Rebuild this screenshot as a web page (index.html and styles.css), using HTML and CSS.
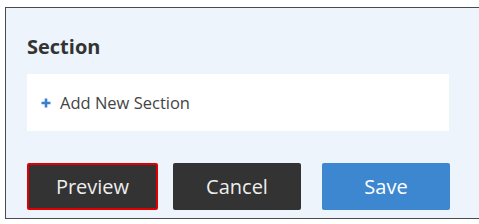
FILE: index.html
```html
<!DOCTYPE html>
<html>
<head>
<meta charset="utf-8">
<link rel="stylesheet" href="styles.css">
</head>
<body>
<div class="frame">
  <h2 class="title">Section</h2>
  <div class="box">
    <span class="plus"><svg width="10" height="10" viewBox="0 0 10 10"><path d="M5 0.5V9.5M0.5 5H9.5" stroke="#3a7ed0" stroke-width="2.6"/></svg></span>
    <span class="add">Add New Section</span>
  </div>
  <div class="actions">
    <button class="btn dark focus">Preview</button>
    <button class="btn dark">Cancel</button>
    <button class="btn blue">Save</button>
  </div>
</div>
</body>
</html>
```
FILE: styles.css
```css
html, body { margin: 0; padding: 0; background: #fff; }
body { font-family: "Open Sans", "Liberation Sans", sans-serif; }
.frame {
  margin: 7px 0 0 5px;
  width: 466px;
  height: 210px;
  border: 1px solid #4a4a4a;
  box-shadow: 1px 1px 0 #8a8a8a;
  background: #edf4fb;
  padding: 0 0 0 21px;
  box-sizing: content-box;
  display: flex;
  flex-direction: column;
}
.title {
  margin: 26px 0 0 0;
  font-size: 20px;
  font-weight: 700;
  color: #333;
  line-height: 26px;
  height: 40px;
}
.box {
  width: 422px;
  height: 57px;
  background: #fff;
  display: flex;
  align-items: center;
  padding-left: 14px;
  box-sizing: border-box;
}
.plus { display: flex; margin-right: 9px; margin-top: 1px; }
.add { font-size: 16.5px; color: #444; }
.actions {
  display: flex;
  margin-top: 32px;
}
.btn {
  height: 47px;
  width: 128px;
  border: none;
  border-radius: 2px;
  font-family: inherit;
  font-size: 20px;
  font-weight: 500;
  padding: 0;
}
.dark { background: #333; color: #eee; }
.blue { background: #3d87d1; color: #fff; margin-left: 21px; }
.focus { width: 131px; border: 2px solid #e00000; margin-right: 15px; }
```
